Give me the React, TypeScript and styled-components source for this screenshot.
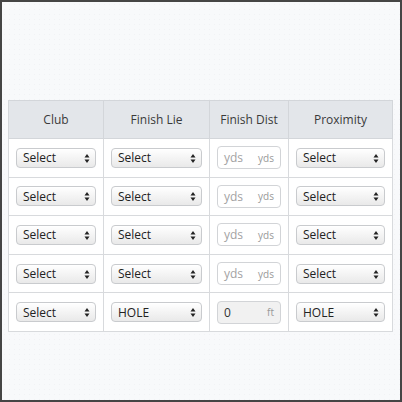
import React from "react";
import styled, { createGlobalStyle } from "styled-components";

const Global = createGlobalStyle`
  html, body { margin: 0; padding: 0; }
  body {
    width: 402px; height: 402px; overflow: hidden;
    font-family: "Open Sans", "Liberation Sans", sans-serif;
  }
  * { box-sizing: border-box; }
`;

const Frame = styled.div`
  width: 402px;
  height: 402px;
  border: 2px solid #454545;
  background-color: #f8f9fb;
  background-image: radial-gradient(#f1f2f5 0.6px, transparent 0.8px);
  background-size: 5px 5px;
  padding: 98px 8px 0 6px;
`;

const Table = styled.table`
  border-collapse: collapse;
  width: 384px;
  table-layout: fixed;
  background: #fff;
`;

const Th = styled.th<{ $w: number }>`
  width: ${(p) => p.$w}px;
  height: 38px;
  background: #e3e6ea;
  color: #3a3a3a;
  font-weight: 400;
  font-size: 12px;
  text-align: center;
  border: 1px solid #d3d6da;
  padding: 0;
`;

const Td = styled.td`
  height: 38.6px;
  border: 1px solid #d8dadd;
  padding: 0 7px;
  vertical-align: middle;
`;

const SelectWrap = styled.div`
  position: relative;
  height: 20px;
  border: 1px solid #c9cbce;
  border-radius: 4px;
  background: linear-gradient(#ffffff, #e9e9e9);
  box-shadow: inset 0 1px 0 #fff;
  display: flex;
  align-items: center;
  padding-left: 6px;
  font-size: 12px;
  color: #222;
`;

const Arrow = styled.svg`
  position: absolute;
  right: 5px;
  top: 4px;
`;

const InputWrap = styled.div<{ $disabled?: boolean }>`
  height: 23px;
  border: 1px solid #d2d4d7;
  border-radius: 4px;
  background: ${(p) => (p.$disabled ? "#f1f1f1" : "#fff")};
  display: flex;
  align-items: center;
  padding: 0 6px;
`;

const Value = styled.span<{ $placeholder?: boolean }>`
  flex: 1;
  font-size: 12px;
  color: ${(p) => (p.$placeholder ? "#a3a3a3" : "#333")};
`;

const Suffix = styled.span`
  font-size: 10px;
  color: #999;
`;

const Select = ({ label }: { label: string }) => (
  <SelectWrap>
    {label}
    <Arrow width="6" height="11" viewBox="0 0 6 11">
      <path d="M3 1 L5.5 4.6 L0.5 4.6 Z" fill="#222" />
      <path d="M3 10 L5.5 6.4 L0.5 6.4 Z" fill="#222" />
    </Arrow>
  </SelectWrap>
);

const rows = [
  { club: "Select", lie: "Select", dist: "yds", unit: "yds", prox: "Select", dis: false },
  { club: "Select", lie: "Select", dist: "yds", unit: "yds", prox: "Select", dis: false },
  { club: "Select", lie: "Select", dist: "yds", unit: "yds", prox: "Select", dis: false },
  { club: "Select", lie: "Select", dist: "yds", unit: "yds", prox: "Select", dis: false },
  { club: "Select", lie: "HOLE", dist: "0", unit: "ft", prox: "HOLE", dis: true },
];

export default function App() {
  return (
    <>
      <Global />
      <Frame>
        <Table>
          <thead>
            <tr>
              <Th $w={95}>Club</Th>
              <Th $w={106}>Finish Lie</Th>
              <Th $w={79}>Finish Dist</Th>
              <Th $w={104}>Proximity</Th>
            </tr>
          </thead>
          <tbody>
            {rows.map((r, i) => (
              <tr key={i}>
                <Td><Select label={r.club} /></Td>
                <Td><Select label={r.lie} /></Td>
                <Td>
                  <InputWrap $disabled={r.dis}>
                    <Value $placeholder={!r.dis}>{r.dist}</Value>
                    <Suffix>{r.unit}</Suffix>
                  </InputWrap>
                </Td>
                <Td><Select label={r.prox} /></Td>
              </tr>
            ))}
          </tbody>
        </Table>
      </Frame>
    </>
  );
}
